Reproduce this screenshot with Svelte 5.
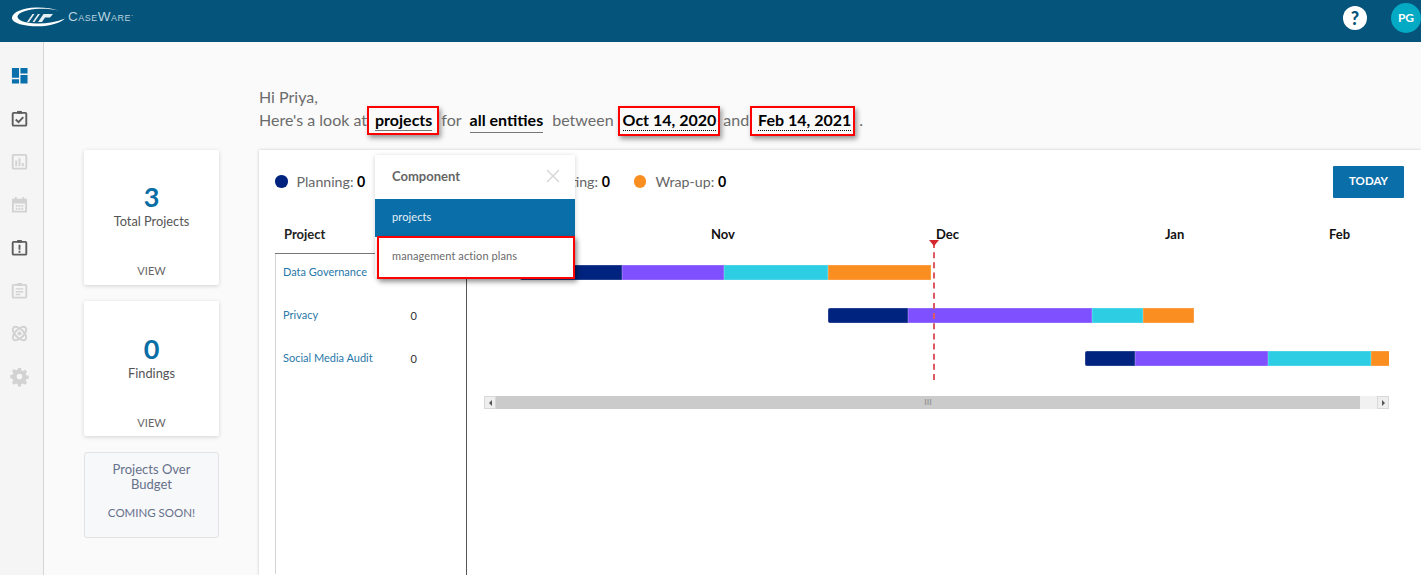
<script>
  const navIcons = [
    { id: 'dash', on: 'blue' },
    { id: 'check', on: 'dark' },
    { id: 'chart', on: 'off' },
    { id: 'cal', on: 'off' },
    { id: 'alert', on: 'dark' },
    { id: 'list', on: 'off' },
    { id: 'atom', on: 'off' },
    { id: 'gear', on: 'off' }
  ];
  const legend = [
    { label: 'Planning', color: '#00237f' },
    { label: 'Fieldwork', color: '#7f50ff' },
    { label: 'Reporting', color: '#2dcee3' },
    { label: 'Wrap-up', color: '#fa8e20' }
  ];
  const colors = ['#00237f', '#7f50ff', '#2dcee3', '#fa8e20'];
  const months = [
    { label: 'Nov', x: 244 },
    { label: 'Dec', x: 469 },
    { label: 'Jan', x: 698 },
    { label: 'Feb', x: 862 }
  ];
  const rows = [
    { name: 'Data Governance', start: 53, widths: [102, 102, 104, 103] },
    { name: 'Privacy', start: 361, widths: [80, 184, 51, 51] },
    { name: 'Social Media Audit', start: 618, widths: [50, 133, 103, 60] }
  ];
</script>

<div class="app">
  <header class="top">
    <div class="brand">
      <svg class="logo" width="54" height="20" viewBox="0 0 54 20">
        <path d="M0 10.500C1 5 10 .8 24 .4c9-.2 16 .8 23 3.300C41 2.200 34 1.600 27 1.800 17 2.200 6 5.500 5.500 9.500c-.4 3.800 8 6.700 19 7 10 .2 20-1.300 28.500-5-5 4.600-15 7.800-27 7.800C11 19.300 -.8 16 0 10.500z" fill="#fff"/>
        <path d="M15 15l5.500-8h2L17 15zM20.500 15 26 7h2l-5.500 8zM26 15l5.500-8H41l-3 3.500h-5L30 15z" fill="#fff" opacity=".9"/>
      </svg>
      <span class="wordmark">CaseWare<sup>.</sup></span>
    </div>
    <div class="top-right">
      <span class="help">?</span>
      <span class="avatar">PG</span>
    </div>
  </header>

  <div class="body">
    <nav class="side">
      {#each navIcons as icon}
        <svg class="nav-icon {icon.on}" width="17" height="17" viewBox="0 0 18 18">
          {#if icon.id === 'dash'}
            <path d="M1 1h7.500v10.500H1zM10 1h7.500v6H10zM10 8.500h7.500v9H10zM1 13h7.500v4.500H1z"/>
          {:else if icon.id === 'check'}
            <rect class="ln" x="1.800" y="3" width="14.400" height="13.500" rx="1"/>
            <path d="M6.500 1h5v3h-5z"/>
            <path class="ln" d="M5 10l3 2.800L13 7.500"/>
          {:else if icon.id === 'chart'}
            <rect class="ln" x="1.800" y="2" width="14.400" height="14.500" rx="1"/>
            <path d="M4.500 8h2v6h-2zM8 5.500h2V14H8zM11.500 10.500h2V14h-2z"/>
          {:else if icon.id === 'cal'}
            <path d="M4 1h2v2h6V1h2v2h3v14.500H1V3h3zM3 8v7.500h12V8z" fill-rule="evenodd"/>
            <path d="M5 9.500h2v2H5zM8 9.500h2v2H8zM11 9.500h2v2h-2zM5 12.500h2v2H5zM8 12.500h2v2H8zM11 12.500h2v2h-2z"/>
          {:else if icon.id === 'alert'}
            <rect class="ln" x="1.800" y="3" width="14.400" height="13.500" rx="1"/>
            <path d="M6.500 1h5v3h-5zM8 6h2v5.500H8zM8 12.500h2v2H8z"/>
          {:else if icon.id === 'list'}
            <rect class="ln" x="1.800" y="3" width="14.400" height="13.500" rx="1"/>
            <path d="M6.500 1h5v3h-5zM5 6.500h8v1.500H5zM5 9.500h8v1.500H5zM5 12.500h5v1.500H5z"/>
          {:else if icon.id === 'atom'}
            <ellipse class="ln" cx="9" cy="9" rx="9" ry="4.500" transform="rotate(45 9 9)"/>
            <ellipse class="ln" cx="9" cy="9" rx="9" ry="4.500" transform="rotate(-45 9 9)"/>
            <circle cx="9" cy="9" r="2.200"/>
          {:else}
            <path fill-rule="evenodd" d="M7.500 0h3l.5 2.600 1.700.7 2.200-1.500 2.100 2.100-1.500 2.200.7 1.700 2.600.5v3l-2.600.5-.7 1.700 1.500 2.200-2.100 2.100-2.200-1.500-1.700.7-.5 2.500h-3l-.5-2.500-1.700-.7-2.200 1.500-2.100-2.100 1.500-2.200-.7-1.700L-.800 10.500v-3l2.600-.5.700-1.700-1.500-2.200 2.100-2.100 2.200 1.500 1.700-.7zM9 6a3 3 0 1 0 0 6 3 3 0 0 0 0-6z"/>
          {/if}
        </svg>
      {/each}
    </nav>

    <main class="main">
      <div class="greeting">
        <div>Hi Priya,</div>
        <div class="sentence">
          <span>Here's a look at</span>
          <span class="boxed b1"><b class="solid">projects</b></span>
          <span>for</span>
          <b class="solid">all entities</b>
          <span class="between">between</span>
          <span class="boxed b2"><b class="dotted">Oct 14, 2020</b></span>
          <span>and</span>
          <span class="boxed b3"><b class="dotted">Feb 14, 2021</b></span>
          <span>.</span>
        </div>
      </div>

      <div class="content">
        <aside class="cards">
          <section class="card">
            <strong>3</strong>
            <span class="card-label">Total Projects</span>
            <a class="view" href="#total">VIEW</a>
          </section>
          <section class="card">
            <strong>0</strong>
            <span class="card-label">Findings</span>
            <a class="view" href="#findings">VIEW</a>
          </section>
          <section class="soon">
            <span>Projects Over Budget</span>
            <em>COMING SOON!</em>
          </section>
        </aside>

        <section class="panel">
          <div class="legend-row">
            <div class="legend">
              {#each legend as item}
                <div class="legend-item">
                  <i style="background:{item.color}"></i>
                  <span>{item.label}: <b>0</b></span>
                </div>
              {/each}
            </div>
            <button class="today">TODAY</button>
          </div>

          <div class="gantt">
            <div class="table">
              <div class="thead">Project</div>
              <div class="tbody">
                {#each rows as row}
                  <div class="trow"><a href="#row">{row.name}</a><span>0</span></div>
                {/each}
              </div>
            </div>
            <div class="chart">
              <div class="months">
                {#each months as m}
                  <span style="left:{m.x}px">{m.label}</span>
                {/each}
              </div>
              {#each rows as row}
                <div class="bar-row">
                  <div class="bar" style="margin-left:{row.start}px">
                    {#each row.widths as w, i}
                      <span style="width:{w}px;background:{colors[i]}"></span>
                    {/each}
                  </div>
                </div>
              {/each}
              <div class="today-line"><i></i></div>
              <div class="scrollbar">
                <span class="sb-btn"><i class="left"></i></span>
                <span class="thumb">III</span>
                <span class="sb-gap"></span>
                <span class="sb-btn"><i class="right"></i></span>
              </div>
            </div>
          </div>

          <div class="popup">
            <div class="pop-head">
              <span>Component</span>
              <svg width="14" height="14" viewBox="0 0 14 14"><path d="M1 1l12 12M13 1L1 13"/></svg>
            </div>
            <div class="pop-item active">projects</div>
            <div class="pop-item">management action plans</div>
            <div class="pop-mark"></div>
          </div>
        </section>
      </div>
    </main>
  </div>
</div>

<style>
  :global(body) { margin: 0; background: #fafafa; }
  .app { width: 1421px; height: 575px; overflow: hidden; font-family: Lato, "Open Sans", sans-serif; color: #666; }
  .top { height: 42px; background: #04547b; display: flex; justify-content: space-between; align-items: center; box-sizing: border-box; padding: 0 0 6px 12px; }
  .brand { display: flex; align-items: center; gap: 2px; margin-top: -3px; }
  .logo { display: block; }
  .wordmark { font: 13.500px "Liberation Sans", Arial, sans-serif; font-variant: small-caps; color: #b9d2de; letter-spacing: .5px; }
  .wordmark sup { font-size: 8px; line-height: 0; }
  .top-right { display: flex; align-items: center; gap: 24px; }
  .help { width: 24px; height: 24px; border-radius: 50%; background: #fff; color: #04547b; font: 900 18px/24px Lato, sans-serif; text-align: center; }
  .avatar { width: 30px; height: 30px; border-radius: 50%; background: #04a9c4; color: #fff; font: 700 12px/30px Lato, sans-serif; text-align: center; }

  .body { display: flex; height: 533px; }
  .side { width: 43px; flex: none; background: #f5f5f5; border-right: 1px solid #d6d6da; display: flex; flex-direction: column; align-items: center; gap: 26px; padding-top: 25px; box-sizing: content-box; }
  .nav-icon { flex: none; fill: currentColor; display: block; margin-right: 5px; overflow: visible; }
  .nav-icon .ln { fill: none; stroke: currentColor; stroke-width: 2; }
  .blue { color: #0a70ab; }
  .dark { color: #5e5e5e; }
  .off { color: #d2d2d2; }

  .main { flex: 1; min-width: 0; padding: 43px 0 0 40px; background: #fafafa; }
  .greeting { margin-left: 175px; font-size: 16px; line-height: 23px; color: #6b6b6b; height: 65px; }
  .sentence { display: flex; align-items: baseline; gap: 8px; white-space: nowrap; margin-top: -2px; }
  .sentence b { color: #000; font-weight: 700; }
  .solid { border-bottom: 1px solid #777; padding-bottom: 1px; }
  .dotted { border-bottom: 1px dotted #000; padding-bottom: 1px; }
  .between { margin-left: 1px; }
  .boxed { border: 2px solid #f00; box-shadow: 2px 3px 5px rgba(0,0,0,.4); padding-bottom: 2px; }
  .b1 { padding-left: 6px; padding-right: 5px; margin: 0 -6px 0 -8px; }
  .b2 { padding-left: 3px; padding-right: 2px; margin: 0 -5px 0 -4px; padding-bottom: 3px; }
  .b3 { padding-left: 6px; padding-right: 2px; margin: 0 -4px 0 -7px; padding-bottom: 3px; }

  .content { display: flex; gap: 40px; }
  .cards { width: 135px; flex: none; display: flex; flex-direction: column; gap: 16px; }
  .card { height: 135px; box-sizing: border-box; background: #fff; border-radius: 2px; box-shadow: 0 1px 4px rgba(0,0,0,.16); display: flex; flex-direction: column; align-items: center; padding-top: 30px; }
  .card + .card { padding-top: 31px; }
  .card + .card .view { margin-bottom: 6px; }
  .card strong { color: #0a6ea6; font-size: 27px; font-weight: 700; line-height: 33px; }
  .card-label { font-size: 12.800px; line-height: 16px; margin-top: 0; color: #555; }
  .view { margin-top: auto; margin-bottom: 7px; font-size: 11px; line-height: 14px; color: #666; text-decoration: none; }
  .soon { height: 86px; box-sizing: border-box; background: #f7f8fa; border: 1px solid #e3e3e5; border-radius: 3px; padding-top: 9px; text-align: center; color: #66708a; font-size: 13px; line-height: 15px; display: flex; flex-direction: column; align-items: center; }
  .soon span { width: 90px; }
  .soon em { font-style: normal; font-size: 11.500px; margin-top: 13px; }

  .panel { position: relative; width: 1162px; height: 425px; flex: none; background: #fff; box-shadow: 0 0 3px rgba(0,0,0,.2); padding: 16px 17px 0 16px; box-sizing: border-box; }
  .legend-row { display: flex; justify-content: space-between; align-items: center; height: 32px; }
  .legend { display: flex; gap: 24px; font-size: 14.200px; color: #666; padding-bottom: 1px; }
  .legend-item { display: flex; align-items: center; gap: 9px; white-space: nowrap; }
  .legend-item i { width: 12.500px; height: 12.500px; border-radius: 50%; }
  .legend-item b { color: #000; }
  .today { width: 71px; height: 32px; border: 0; border-radius: 1px; background: #0a6ea8; color: #fff; font: 700 11.500px Lato, sans-serif; padding: 0 0 4px; }

  .gantt { display: flex; height: 377px; margin-top: 0; }
  .table { width: 192px; flex: none; box-sizing: border-box; border-right: 1px solid #555; }
  .thead { height: 56px; box-sizing: border-box; padding: 27px 0 0 9px; font-weight: 700; font-size: 13px; line-height: 18px; color: #222; border-bottom: 1px solid #777; }
  .tbody { border-left: 1px solid #d5d5d5; height: 320px; }
  .trow { height: 36px; box-sizing: border-box; margin-bottom: 7px; display: flex; align-items: center; justify-content: space-between; padding: 0 49px 2px 7px; font-size: 11px; color: #333; }
  .trow a { color: #2a78a8; text-decoration: none; }
  .trow span { position: relative; top: 1px; }
  .chart { position: relative; width: 922px; flex: none; overflow: hidden; padding-top: 56px; box-sizing: border-box; }
  .months { position: absolute; left: 0; top: 27px; width: 100%; height: 18px; }
  .months span { position: absolute; font-weight: 700; font-size: 13px; line-height: 18px; color: #111; }
  .bar-row { height: 36px; margin-bottom: 7px; display: flex; align-items: center; }
  .bar { display: flex; height: 15px; flex: none; }
  .bar span { display: block; height: 15px; flex: none; box-shadow: inset 0 0 0 .5px rgba(255,255,255,.3); }
  .bar span:first-child { border-radius: 2px 0 0 2px; }
  .today-line { position: absolute; left: 466px; top: 44px; height: 138px; border-left: 2px dashed #de5a63; }
  .today-line i { position: absolute; left: -6px; top: -2px; border: 5px solid transparent; border-top: 6px solid #d4272e; border-bottom: 0; }
  .scrollbar { display: flex; width: 905px; height: 13px; margin: 20px 0 0 17px; background: #f1f1f1; border: 0; }
  .sb-btn { width: 12px; flex: none; background: #eee; box-shadow: inset 0 0 0 1px #d8d8d8; display: flex; align-items: center; justify-content: center; }
  .sb-btn i { border: 3px solid transparent; }
  .left { border-right-color: #555 !important; border-left: 0 !important; }
  .right { border-left-color: #555 !important; border-right: 0 !important; }
  .thumb { width: 864px; flex: none; background: #cbcbcb; text-align: center; color: #888; font: 9px/13px "Liberation Sans", sans-serif; }
  .sb-gap { flex: 1; }

  .popup { position: absolute; left: 116px; top: 5px; width: 200px; background: #fff; box-shadow: 0 1px 5px rgba(0,0,0,.18); }
  .pop-head { height: 44px; display: flex; align-items: center; justify-content: space-between; padding: 0 15px 2px 17px; box-sizing: border-box; font-weight: 700; font-size: 13px; color: #666; }
  .pop-head path { stroke: #d8d8d8; stroke-width: 1.500; fill: none; }
  .pop-item { height: 38px; line-height: 36px; padding-left: 17px; font-size: 11px; color: #6a6a6a; letter-spacing: .1px; }
  .pop-item.active { background: #0a6ea8; color: #e8f2f8; }
  .pop-mark { position: absolute; left: 2px; top: 81px; right: 0; height: 43px; box-sizing: border-box; border: 2px solid #f00; box-shadow: 2px 3px 5px rgba(0,0,0,.4); }
  .pop-item:nth-child(3) { height: 40px; line-height: 38px; }
</style>
